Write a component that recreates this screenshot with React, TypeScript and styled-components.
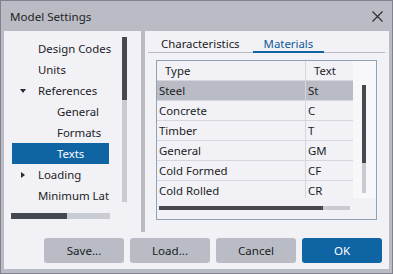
import React from 'react';
import styled, { createGlobalStyle } from 'styled-components';

const GlobalStyle = createGlobalStyle`
  html, body {
    margin: 0;
    padding: 0;
    background: #ffffff;
  }
  * {
    box-sizing: border-box;
  }
  body {
    font-family: 'Segoe UI', 'Noto Sans', 'Open Sans', sans-serif;
    font-size: 11.4px;
    color: #1c1c1f;
  }
`;

const Window = styled.div`
  width: 393px;
  height: 274px;
  border: 1px solid #80838b;
  background: #b9bcc4;
  display: flex;
  flex-direction: column;
`;

const TitleBar = styled.div`
  height: 30px;
  display: flex;
  align-items: center;
  justify-content: space-between;
  padding: 0 9px 0 9px;
  font-size: 11.6px;
  color: #1f1f24;
`;

const Body = styled.div`
  flex: 1;
  margin: 0 3px 4px 3px;
  background: #f1f1f6;
  display: flex;
  flex-direction: column;
`;

const Main = styled.div`
  height: 201px;
  display: flex;
`;

const LeftPane = styled.div`
  width: 137px;
  padding: 6px 0 0 8px;
`;

const Splitter = styled.div`
  width: 4px;
  background: #b9bcc4;
`;

const RightPane = styled.div`
  flex: 1;
  display: flex;
  flex-direction: column;
  padding: 4px 4px 12px 3px;
`;

const TreeWrap = styled.div`
  display: flex;
`;

const Tree = styled.div`
  width: 97px;
  padding-top: 1px;
`;

const TreeRow = styled.div<{ $level: number; $selected?: boolean }>`
  height: 21px;
  display: flex;
  align-items: center;
  padding-left: ${(p) => (p.$level === 0 ? 26 : 45)}px;
  position: relative;
  white-space: nowrap;
  background: ${(p) => (p.$selected ? '#0f64a4' : 'transparent')};
  color: ${(p) => (p.$selected ? '#ffffff' : '#1c1c1f')};
`;

const Caret = styled.svg<{ $right?: boolean }>`
  position: absolute;
  left: ${(p) => (p.$right ? 9 : 8)}px;
  top: ${(p) => (p.$right ? 8 : 9)}px;
`;

const VScroll = styled.div<{ $width: number; $height: number; $thumb: number }>`
  width: ${(p) => p.$width}px;
  height: ${(p) => p.$height}px;
  background: linear-gradient(
    to bottom,
    #45484f 0,
    #45484f ${(p) => p.$thumb}px,
    #c9cbd2 ${(p) => p.$thumb}px
  );
`;

const HScroll = styled.div<{ $width: number; $thumb: number; $height: number }>`
  width: ${(p) => p.$width}px;
  height: ${(p) => p.$height}px;
  background: linear-gradient(
    to right,
    #45484f 0,
    #45484f ${(p) => p.$thumb}px,
    #c9cbd2 ${(p) => p.$thumb}px
  );
`;

const LeftVScroll = styled.div`
  margin-left: 13px;
`;

const LeftHScroll = styled.div`
  margin: 7px 0 0 -1px;
`;

const TabBar = styled.div`
  display: flex;
  border-bottom: 1px solid #b9bcc4;
  height: 18px;
  padding-left: 2px;
`;

const Tab = styled.div<{ $active?: boolean }>`
  padding: 0 11px;
  margin-right: 2px;
  line-height: 17px;
  height: 18px;
  color: ${(p) => (p.$active ? '#0f5a96' : '#1c1c1f')};
  border-bottom: 2px solid ${(p) => (p.$active ? '#0f64a4' : 'transparent')};
  margin-bottom: -1px;
`;

const TableBox = styled.div`
  margin: 7px 8px 0 8px;
  flex: 1;
  border: 1px solid #8ea2ba;
  display: flex;
  flex-direction: column;
`;

const TableTop = styled.div`
  display: flex;
`;

const Grid = styled.div`
  width: 196px;
  height: 137px;
  overflow: hidden;
  background: #f1f1f6;
`;

const Row = styled.div<{ $selected?: boolean }>`
  display: grid;
  grid-template-columns: 149px 47px;
  height: 20px;
  border-bottom: 1px solid #d6d7de;
  background: ${(p) => (p.$selected ? '#b9bcc4' : 'transparent')};
`;

const Cell = styled.div<{ $header?: boolean; $last?: boolean }>`
  display: flex;
  align-items: center;
  padding-left: ${(p) => (p.$header ? 8 : 2)}px;
  border-right: ${(p) => (p.$last ? 'none' : '1px solid #d6d7de')};
  white-space: nowrap;
`;

const Gutter = styled.div`
  flex: 1;
  background: #f8f8fb;
  padding: 24px 0 0 9px;
`;

const TableHScroll = styled.div`
  margin: 8px 0 0 2px;
`;

const Footer = styled.div`
  flex: 1;
  display: flex;
  justify-content: flex-end;
  align-items: flex-start;
  gap: 6px;
  padding: 6px 7px 0 0;
`;

const Button = styled.button<{ $primary?: boolean }>`
  width: 80px;
  height: 25px;
  border: none;
  border-radius: 3px;
  font-family: inherit;
  font-size: 11.6px;
  padding: 0;
  background: ${(p) => (p.$primary ? '#0f64a4' : '#b9bcc4')};
  color: ${(p) => (p.$primary ? '#ffffff' : '#1c1c1f')};
`;

const treeItems = [
  { label: 'Design Codes', level: 0 },
  { label: 'Units', level: 0 },
  { label: 'References', level: 0, caret: 'down' },
  { label: 'General', level: 1 },
  { label: 'Formats', level: 1 },
  { label: 'Texts', level: 1, selected: true },
  { label: 'Loading', level: 0, caret: 'right' },
  { label: 'Minimum Lat', level: 0 },
];

const materials = [
  ['Steel', 'St'],
  ['Concrete', 'C'],
  ['Timber', 'T'],
  ['General', 'GM'],
  ['Cold Formed', 'CF'],
  ['Cold Rolled', 'CR'],
];

const CloseIcon = () => (
  <svg width="11" height="11" viewBox="0 0 11 11">
    <path d="M0.5 0.5 L10.5 10.5 M10.5 0.5 L0.5 10.5" stroke="#2a2b30" strokeWidth="1.1" fill="none" />
  </svg>
);

const App: React.FC = () => {
  return (
    <>
      <GlobalStyle />
      <Window>
        <TitleBar>
          <span>Model Settings</span>
          <CloseIcon />
        </TitleBar>
        <Body>
          <Main>
            <LeftPane>
              <TreeWrap>
                <Tree>
                  {treeItems.map((item) => (
                    <TreeRow key={item.label} $level={item.level} $selected={item.selected}>
                      {item.caret === 'down' && (
                        <Caret width="6" height="4" viewBox="0 0 6 4">
                          <path d="M0 0 L6 0 L3 4 Z" fill="#2a2b30" />
                        </Caret>
                      )}
                      {item.caret === 'right' && (
                        <Caret $right width="4" height="6" viewBox="0 0 4 6">
                          <path d="M0 0 L4 3 L0 6 Z" fill="#2a2b30" />
                        </Caret>
                      )}
                      {item.label}
                    </TreeRow>
                  ))}
                </Tree>
                <LeftVScroll>
                  <VScroll $width={5} $height={165} $thumb={63} />
                </LeftVScroll>
              </TreeWrap>
              <LeftHScroll>
                <HScroll $width={99} $thumb={56} $height={6} />
              </LeftHScroll>
            </LeftPane>
            <Splitter />
            <RightPane>
              <TabBar>
                <Tab>Characteristics</Tab>
                <Tab $active>Materials</Tab>
              </TabBar>
              <TableBox>
                <TableTop>
                  <Grid>
                    <Row>
                      <Cell $header>Type</Cell>
                      <Cell $header $last>Text</Cell>
                    </Row>
                    {materials.map(([type, text], i) => (
                      <Row key={type} $selected={i === 0}>
                        <Cell>{type}</Cell>
                        <Cell $last>{text}</Cell>
                      </Row>
                    ))}
                  </Grid>
                  <Gutter>
                    <VScroll $width={4} $height={108} $thumb={78} />
                  </Gutter>
                </TableTop>
                <TableHScroll>
                  <HScroll $width={191} $thumb={164} $height={4} />
                </TableHScroll>
              </TableBox>
            </RightPane>
          </Main>
          <Footer>
            <Button>Save...</Button>
            <Button>Load...</Button>
            <Button>Cancel</Button>
            <Button $primary>OK</Button>
          </Footer>
        </Body>
      </Window>
    </>
  );
};

export default App;
